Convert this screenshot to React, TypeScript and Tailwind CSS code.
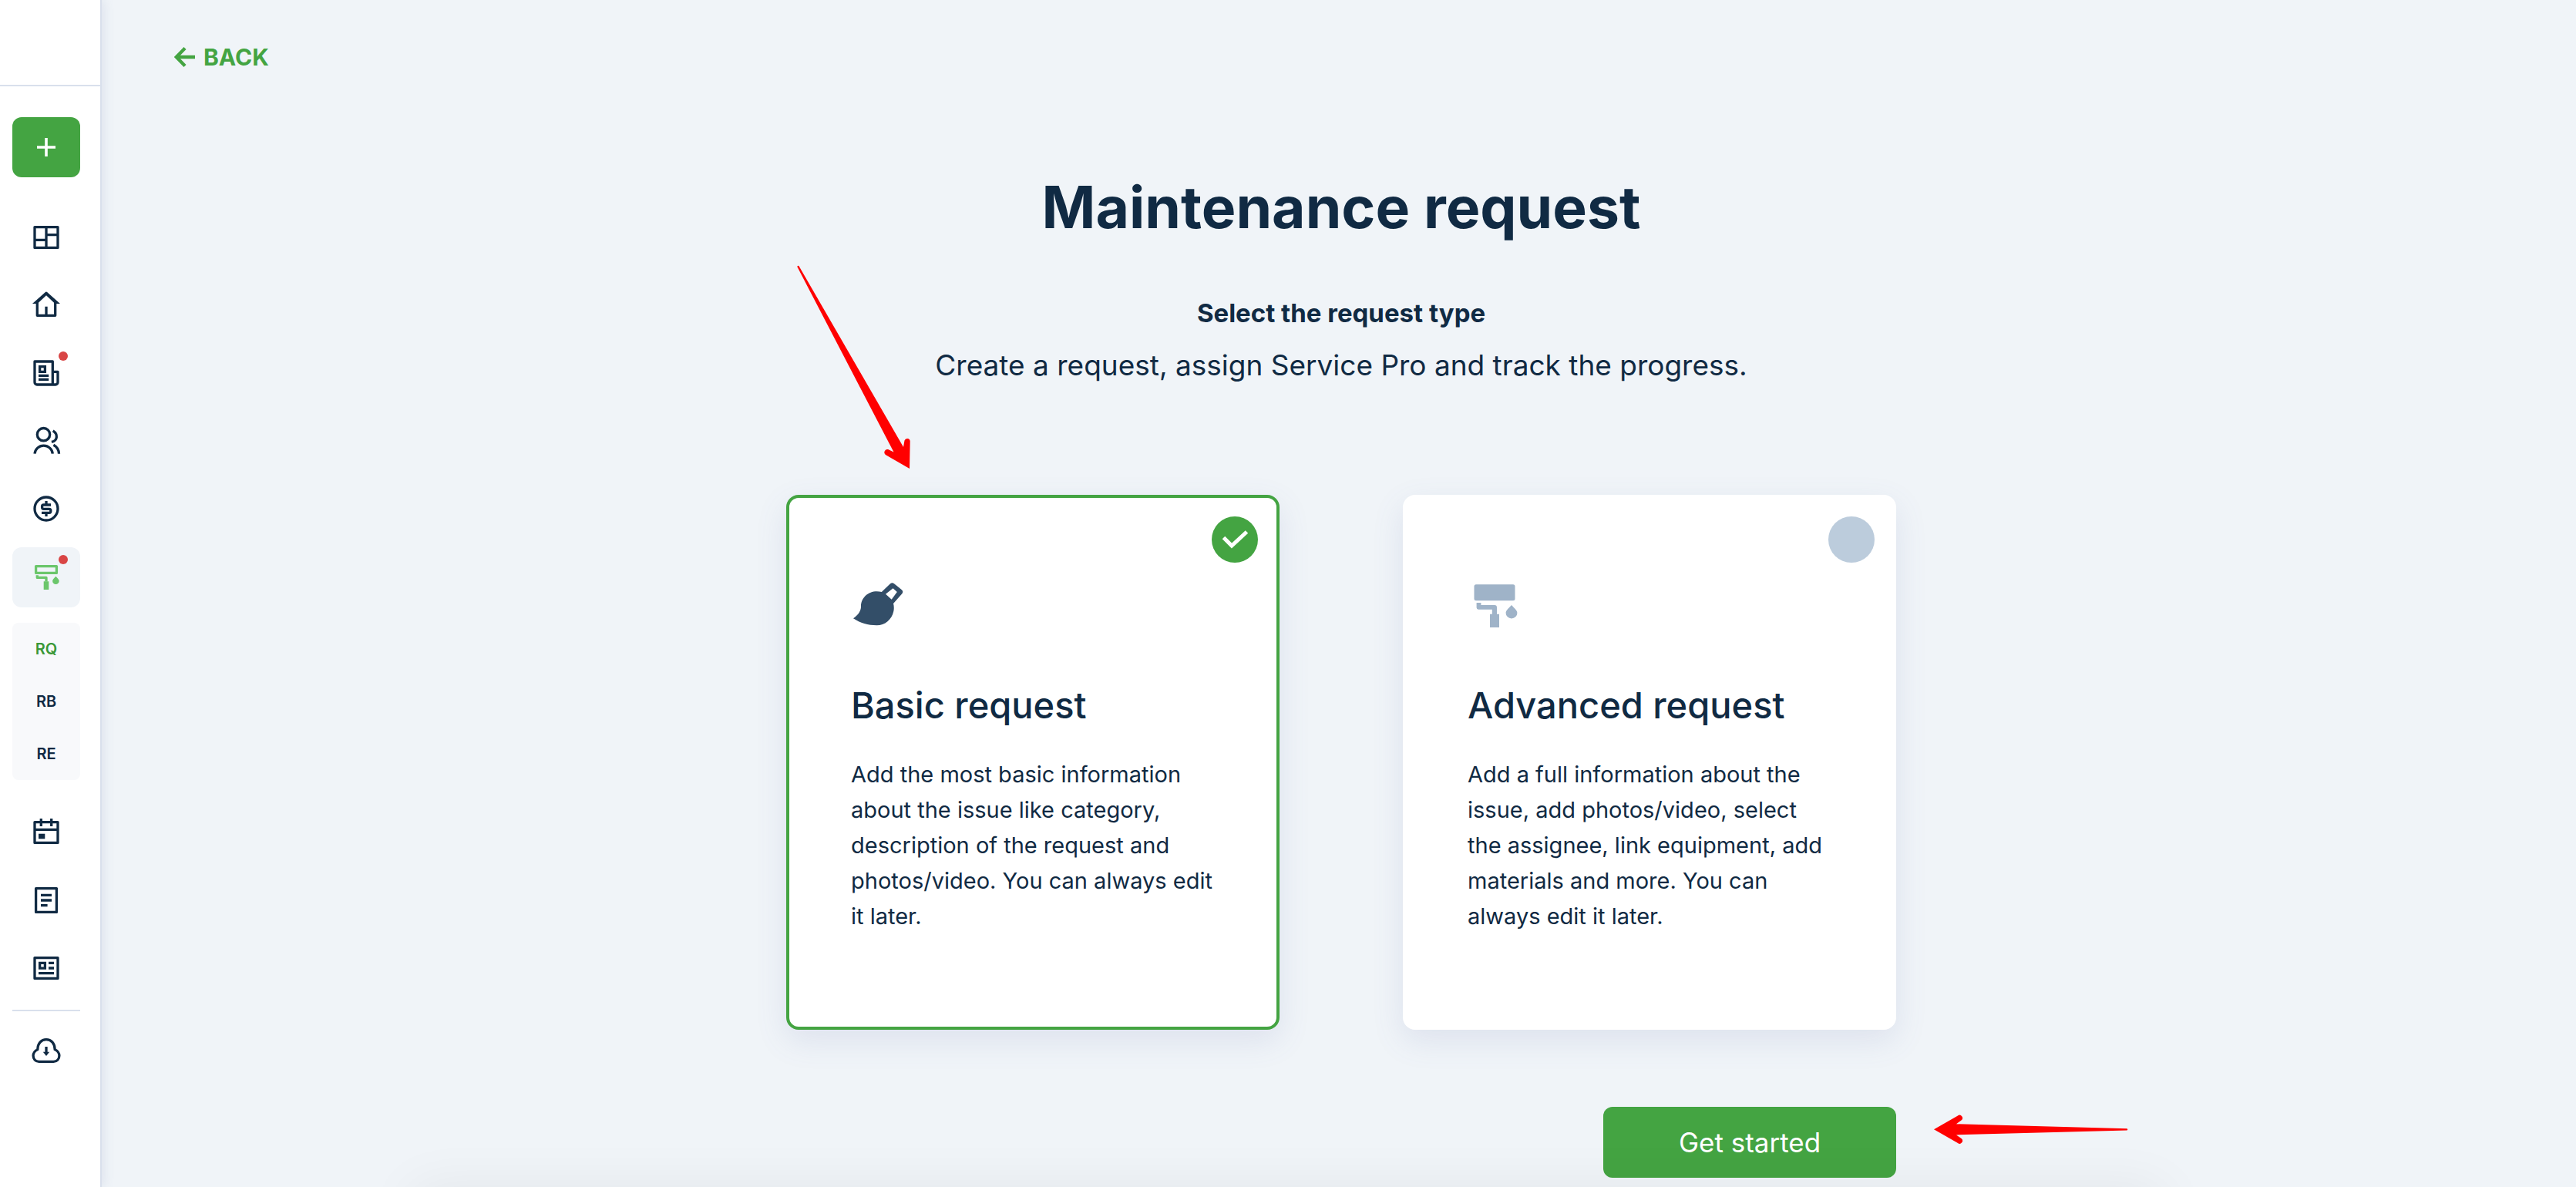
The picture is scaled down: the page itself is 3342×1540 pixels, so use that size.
import { useState } from 'react'
import type { ReactNode } from 'react'

function NavIcon({ children }: { children: ReactNode }) {
  return (
    <svg
      className="h-10 w-10"
      viewBox="0 0 40 40"
      fill="none"
      stroke="currentColor"
      strokeWidth="3.3"
      aria-hidden="true"
    >
      {children}
    </svg>
  )
}

const DashboardIcon = () => (
  <NavIcon>
    <path d="M5 5.6h30v26.8H5zM20 5.6v26.8M20 15.7h15M5 22.3h15" strokeLinejoin="round" />
  </NavIcon>
)

const HomeIcon = () => (
  <NavIcon>
    <path d="M8.3 14.5v17.8h23.4V14.5M20 20.7v11.6" strokeLinejoin="round" />
    <path d="M2 16.9 18.9 2q1.1-.9 2.2 0L38 16.9h-6.6L20 6.3 8.6 16.9z" fill="currentColor" stroke="none" />
  </NavIcon>
)

const NewsIcon = () => (
  <NavIcon>
    <path d="M28.3 34V4H5v27a3 3 0 0 0 3 3h24a3 3 0 0 0 3-3V17.3h-6.7" strokeLinejoin="round" />
    <path d="M11.6 10.6h6.8v6.8h-6.8zM10 22.3h13.2M10 27.3h13.2" />
  </NavIcon>
)

const UsersIcon = () => (
  <NavIcon>
    <circle cx="16.5" cy="10.7" r="8.2" />
    <path d="M5 35.7a11.7 11.7 0 0 1 23.3 0M28.7 5.8c6.7 4.2 6.3 12.9-1.8 14.6M29.4 24.2c4.4 2.4 6.9 6.5 7.1 11.5" />
  </NavIcon>
)

const DollarIcon = () => (
  <NavIcon>
    <circle cx="20" cy="19" r="15" />
    <path d="M26 14h-9.4a2 2 0 0 0-2 2v1.3a2 2 0 0 0 2 2h7.2a2 2 0 0 1 2 2v1a2 2 0 0 1-2 2H14M20 9v5M20 24.3V29" />
  </NavIcon>
)

const RollerIcon = () => (
  <NavIcon>
    <path d="M6.6 5.6h26.8v8.8H6.6z" strokeLinejoin="round" />
    <path d="M8.3 17.2v3.2H20v5" strokeLinejoin="round" />
    <path
      d="M16.7 25.3h6.6V36h-6.6zM32.4 18.7c-2.3 2.6-4.3 4.1-4.3 6a4.3 4.3 0 0 0 8.6 0c0-1.9-2-3.4-4.3-6z"
      fill="currentColor"
      stroke="none"
    />
  </NavIcon>
)

const CalendarIcon = () => (
  <NavIcon>
    <path d="M5 7.6h30v26.8H5zM5 17.3h30M13.3 3v10M26.7 3v10" strokeLinejoin="round" />
    <path d="M10 22.7h8.3v6.6H10z" fill="currentColor" stroke="none" />
  </NavIcon>
)

const DocumentIcon = () => (
  <NavIcon>
    <path d="M6.6 5.6h26.8v30.8H6.6z" strokeLinejoin="round" />
    <path d="M13 14.3h14M13 21h14M13 27.7h8.6" />
  </NavIcon>
)

const ProfileIcon = () => (
  <NavIcon>
    <path d="M5 7.6h30v26.8H5z" strokeLinejoin="round" />
    <path d="M11.6 14.3h6.8v6.8h-6.8zM23 14.3h7M23 21h7M10 27.7h20" />
  </NavIcon>
)

const CloudIcon = () => (
  <NavIcon>
    <path d="M8.8 18.6C9 10.5 13.5 5.7 20 5.7s11 4.8 11.2 12.9c3.7 1.9 5.7 4.6 5.7 8 0 4.4-3 7.7-7.4 7.7h-19c-4.4 0-7.4-3.3-7.4-7.7 0-3.4 2-6.1 5.7-8z" />
    <path d="M20 15v8" />
    <path d="M15.8 21.8h8.4L20 27z" fill="currentColor" stroke="none" />
  </NavIcon>
)

const BrushIcon = () => (
  <svg className="h-18 w-18 text-[#334e68]" viewBox="0 0 72 72" fill="currentColor" aria-hidden="true">
    <path
      fillRule="evenodd"
      d="M3 52.3C10 47.5 13 42 13 37c0-11.5 9.3-19.7 20.5-19.7 2.3 0 4.3.2 6.3.7L51 7.2q2.6-2 5 0l10.2 8.2q2 2.2.3 4.6L55 33c.9 3.3 1 7 .3 10-2.3 11-11.3 18.3-21.8 18.3C22 61.3 12 58.3 3 52.3zM54.5 13.3 45 20.7l7.7 7 7.1-9.7z"
    />
  </svg>
)

const SolidRollerIcon = () => (
  <svg className="h-18 w-18 text-[#9fb3c8]" viewBox="0 0 72 72" fill="currentColor" aria-hidden="true">
    <rect x="8.5" y="8.3" width="53" height="21" rx="2.5" />
    <path d="M11.6 32h5.8v3H35a3 3 0 0 1 3 3v8.7h3V64H29V46.7h2.8v-6H14a2.4 2.4 0 0 1-2.4-2.4zM57 35c-3.8 4.4-7.4 6.8-7.4 10.2a7.4 7.2 0 0 0 14.8 0C64.4 41.8 60.8 39.4 57 35z" />
  </svg>
)

type NavItem = { name: string; icon: ReactNode; active?: boolean; dot?: boolean }

const mainNav: NavItem[] = [
  { name: 'Dashboard', icon: <DashboardIcon /> },
  { name: 'Properties', icon: <HomeIcon /> },
  { name: 'Listings', icon: <NewsIcon />, dot: true },
  { name: 'Contacts', icon: <UsersIcon /> },
  { name: 'Accounting', icon: <DollarIcon /> },
  { name: 'Maintenance', icon: <RollerIcon />, active: true, dot: true },
]

const subNav = ['RQ', 'RB', 'RE']

const toolsNav: NavItem[] = [
  { name: 'Calendar', icon: <CalendarIcon /> },
  { name: 'Documents', icon: <DocumentIcon /> },
  { name: 'Profile', icon: <ProfileIcon /> },
]

const requestTypes = [
  {
    id: 'basic',
    title: 'Basic request',
    text: 'Add the most basic information about the issue like category, description of the request and photos/video. You can always edit it later.',
    icon: <BrushIcon />,
  },
  {
    id: 'advanced',
    title: 'Advanced request',
    text: 'Add a full information about the issue, add photos/video, select the assignee, link equipment, add materials and more. You can always edit it later.',
    icon: <SolidRollerIcon />,
  },
]

function NavLink({ item }: { item: NavItem }) {
  return (
    <a
      href="#"
      aria-label={item.name}
      className={`relative flex h-[78px] items-center justify-center rounded-xl ${
        item.active ? 'bg-[#f0f4f8] text-[#6bc66b]' : 'text-[#102a43]'
      }`}
    >
      {item.icon}
      {item.dot && <span className="absolute top-2.5 right-4 h-3 w-3 rounded-full bg-[#d94545]" />}
    </a>
  )
}

function Sidebar() {
  return (
    <aside className="relative z-10 w-[130px] shrink-0 bg-white shadow-[2px_0_0_#d9e0ec,4px_0_14px_rgba(90,110,170,0.14)]">
      <div className="h-28 border-b-2 border-[#d9e0ec]" />
      <nav className="flex flex-col pt-10 pr-[26px] pl-4">
        <button
          type="button"
          aria-label="Create"
          className="flex h-[78px] items-center justify-center rounded-xl bg-[#44a442] text-white"
        >
          <svg className="h-6 w-6" viewBox="0 0 24 24" stroke="currentColor" strokeWidth="3.6" aria-hidden="true">
            <path d="M12 0v24M0 12h24" />
          </svg>
        </button>

        <div className="mt-10 flex flex-col gap-2.5">
          {mainNav.map((item) => (
            <NavLink key={item.name} item={item} />
          ))}
        </div>

        {/* Maintenance sub menu */}
        <div className="mt-5 flex flex-col rounded-lg bg-[#f8f9fb] text-center text-xl leading-[68px] font-semibold">
          {subNav.map((label, i) => (
            <a key={label} href="#" className={i === 0 ? 'text-[#3a9838]' : 'text-[#102a43]'}>
              {label}
            </a>
          ))}
        </div>

        <div className="mt-7 flex flex-col gap-2.5">
          {toolsNav.map((item) => (
            <NavLink key={item.name} item={item} />
          ))}
        </div>

        <div className="mt-4 border-t-2 border-[#d9e0ec] pt-3">
          <NavLink item={{ name: 'Downloads', icon: <CloudIcon /> }} />
        </div>
      </nav>
    </aside>
  )
}

export default function App() {
  const [selected, setSelected] = useState('basic')

  return (
    <div className="flex min-h-screen bg-[#f0f4f8] font-['Inter',sans-serif] text-[#102a43]">
      <Sidebar />

      <main className="min-w-0 flex-1">
        <header className="pt-14 pl-24">
          <a href="#" className="inline-flex items-center gap-2.5 align-top text-[30px] leading-9 font-bold text-[#44a442]">
            <svg className="h-7 w-7" viewBox="0 0 28 28" fill="none" stroke="currentColor" strokeWidth="4.3" aria-hidden="true">
              <path d="M27 14H4M14 2.5 2.8 14 14 25.5" />
            </svg>
            BACK
          </a>
        </header>

        <section className="pt-33 pl-2">
          <h1 className="text-center text-[75px] leading-[90px] font-bold">Maintenance request</h1>
          <h2 className="mt-18 text-center text-[33px] leading-10 font-bold">Select the request type</h2>
          <p className="mt-6 text-center text-[37px] leading-[48px]">
            Create a request, assign Service Pro and track the progress.
          </p>

          <form className="mx-auto mt-36 w-full max-w-[1440px]" onSubmit={(e) => e.preventDefault()}>
            <div className="relative grid grid-cols-2 gap-40">
              {requestTypes.map((type) => {
                const checked = selected === type.id
                return (
                  <label
                    key={type.id}
                    htmlFor={type.id}
                    className={`relative block cursor-pointer rounded-2xl border-4 bg-white px-20 pt-26 pb-30 shadow-[0_14px_40px_rgba(90,110,170,0.13)] ${
                      checked ? 'border-[#44a442]' : 'border-white'
                    }`}
                  >
                    <input
                      id={type.id}
                      type="radio"
                      name="request-type"
                      className="sr-only"
                      checked={checked}
                      onChange={() => setSelected(type.id)}
                    />
                    <span
                      className={`absolute top-6 right-6 h-15 w-15 rounded-full ${checked ? 'bg-[#44a442]' : 'bg-[#bcccdc]'}`}
                    >
                      {checked && (
                        <svg viewBox="0 0 60 60" fill="none" stroke="white" strokeWidth="5" aria-hidden="true">
                          <path d="M15.5 27.5 26 38l19.500-18" />
                        </svg>
                      )}
                    </span>
                    {type.icon}
                    <span className="mt-16 block text-[47px] leading-[58px] font-medium">{type.title}</span>
                    <span className="mt-[38px] block text-[29px] leading-[46px]">{type.text}</span>
                  </label>
                )
              })}

              {/* Pointer to the basic card */}
              <svg
                className="pointer-events-none absolute bottom-full left-3.5 mb-8 h-[266px] w-[148px]"
                viewBox="0 0 148 266"
                fill="#ff0000"
                aria-hidden="true"
              >
                <path d="M.3 2Q.8.4 2.4 1L138 236l1.5-8.5a3.7 3.7 0 0 1 7.2.7L146 264l-31.200-18a4 4 0 0 1 3.3-7l7.4 3.6z" />
              </svg>
            </div>

            <div className="mt-25 flex justify-end pb-3">
              <div className="relative">
                <button
                  type="submit"
                  className="h-23 w-[380px] rounded-xl bg-[#44a442] text-[35px] text-white"
                >
                  Get started
                </button>
                {/* Pointer to the submit button */}
                <svg
                  className="pointer-events-none absolute top-2 left-full ml-12 h-[43px] w-[254px]"
                  viewBox="0 0 254 43"
                  fill="#ff0000"
                  aria-hidden="true"
                >
                  <path d="M1 21.300 32 3.500a3.700 3.700 0 0 1 4.500 6L30 14.300l221.500 5.900q1.500 1.200 0 2.300L30 28.400l6.500 4.700a3.700 3.700 0 0 1-4.500 6z" />
                </svg>
              </div>
            </div>
          </form>
        </section>
      </main>

      <div className="pointer-events-none fixed inset-x-[16%] top-full z-20 h-20 shadow-[0_0_70px_rgba(0,0,0,0.06)]" />
    </div>
  )
}
